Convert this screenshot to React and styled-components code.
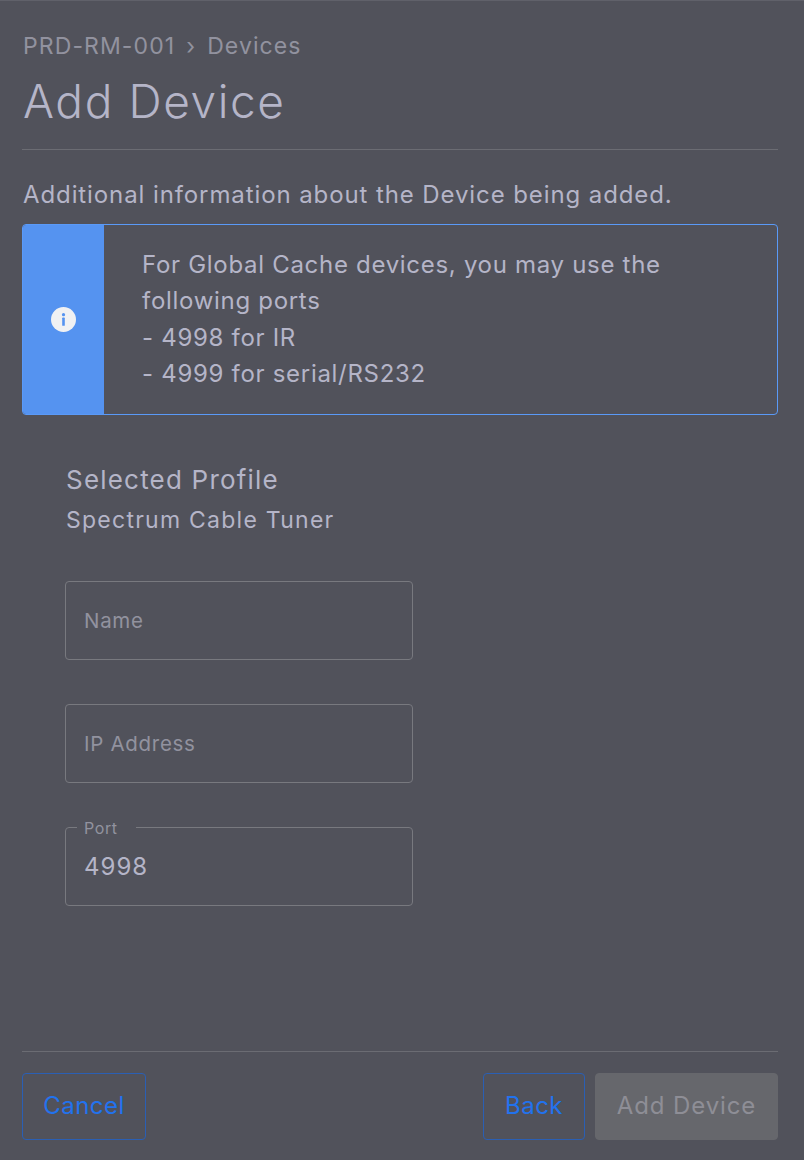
import React from 'react';
import styled, { createGlobalStyle } from 'styled-components';

const GlobalStyle = createGlobalStyle`
  html, body {
    margin: 0;
    padding: 0;
    background-color: #51525b;
  }
  * {
    box-sizing: border-box;
  }
`;

const Page = styled.div`
  width: 804px;
  height: 1160px;
  background-color: #51525b;
  border-top: 1px solid #60616a;
  padding: 0 26px 20px 22px;
  display: flex;
  flex-direction: column;
  font-family: Inter, "Liberation Sans", sans-serif;
  color: #b5b5c8;
`;

const Breadcrumb = styled.div`
  margin-top: 30px;
  height: 30px;
  line-height: 30px;
  font-size: 23px;
  letter-spacing: 1.1px;
  color: #92929f;
  display: flex;
  gap: 11px;
  padding-left: 1px;
`;

const Title = styled.h1`
  margin: 14px 0 0 1px;
  height: 52px;
  line-height: 52px;
  font-size: 46px;
  font-weight: 300;
  letter-spacing: 1.6px;
  color: #b5b5c8;
`;

const Divider = styled.div`
  margin-top: 22px;
  height: 1px;
  background-color: #6b6c73;
`;

const Description = styled.p`
  margin: 30px 0 0 1px;
  height: 30px;
  line-height: 30px;
  font-size: 24px;
  letter-spacing: 0.9px;
  color: #b5b5c8;
  white-space: nowrap;
`;

const InfoBox = styled.div`
  margin-top: 14px;
  height: 191px;
  display: flex;
  border: 1px solid #5a9af8;
  border-radius: 4px;
  overflow: hidden;
`;

const InfoSide = styled.div`
  width: 81px;
  background-color: #5593f0;
  display: flex;
  align-items: center;
  justify-content: center;
`;

const InfoText = styled.div`
  padding: 22px 0 0 38px;
  font-size: 24px;
  letter-spacing: 0.7px;
  line-height: 36.4px;
  white-space: nowrap;
`;

const Form = styled.div`
  margin: 47px 0 0 44px;
  display: flex;
  flex-direction: column;
  flex: 1;
`;

const ProfileLabel = styled.div`
  height: 36px;
  line-height: 36px;
  font-size: 26px;
  letter-spacing: 1.2px;
`;

const ProfileName = styled.div`
  margin-top: 4px;
  height: 36px;
  line-height: 36px;
  font-size: 23px;
  letter-spacing: 1.25px;
`;

const Fields = styled.div`
  margin: 43px 0 0 -1px;
  display: flex;
  flex-direction: column;
  gap: 44px;
`;

const Field = styled.div`
  position: relative;
  width: 348px;
  height: 79px;
  border: 1px solid #78797f;
  border-radius: 4px;
  padding: ${(p) => (p.$filled ? '0 18px 1px' : '0 18px')};
  display: flex;
  align-items: center;
  font-size: ${(p) => (p.$filled ? '24px' : '20.5px')};
  letter-spacing: ${(p) => (p.$filled ? '1px' : '0.7px')};
  color: ${(p) => (p.$filled ? '#b5b5c8' : '#92929f')};
`;

const FloatLabel = styled.span`
  position: absolute;
  top: -10px;
  left: 11px;
  padding: 0 18px 0 7px;
  background-color: #51525b;
  font-size: 16px;
  letter-spacing: 0.6px;
  line-height: 20px;
  color: #92929f;
`;

const Footer = styled.div`
  border-top: 1px solid #6b6c73;
  padding-top: 21px;
  display: flex;
  align-items: center;
  gap: 10px;
`;

const Spacer = styled.div`
  flex: 1;
`;

const Button = styled.button`
  height: 67px;
  width: ${(p) => p.$width}px;
  padding: 0 0 2px;
  border-radius: 4px;
  border: 1px solid ${(p) => (p.disabled ? '#66676c' : '#2a5fb4')};
  background-color: ${(p) => (p.disabled ? '#66676c' : 'transparent')};
  color: ${(p) => (p.disabled ? '#8e8e96' : '#2272ee')};
  font-family: inherit;
  font-size: 24px;
  letter-spacing: ${(p) => (p.disabled ? '0.9px' : '0.5px')};
`;

export default function App() {
  return (
    <>
      <GlobalStyle />
      <Page>
        <Breadcrumb>
          <span>PRD-RM-001</span>
          <span>›</span>
          <span>Devices</span>
        </Breadcrumb>
        <Title>Add Device</Title>
        <Divider />
        <Description>Additional information about the Device being added.</Description>
        <InfoBox>
          <InfoSide>
            <svg width="25" height="25" viewBox="0 0 25 25">
              <circle cx="12.5" cy="12.5" r="12.5" fill="#f0f1f3" />
              <circle cx="12.5" cy="7.7" r="1.6" fill="#5593f0" />
              <rect x="11.2" y="10.6" width="2.6" height="8.2" rx="0.6" fill="#5593f0" />
            </svg>
          </InfoSide>
          <InfoText>
            For Global Cache devices, you may use the
            <br />
            following ports
            <br />- 4998 for IR
            <br />- 4999 for serial/RS232
          </InfoText>
        </InfoBox>
        <Form>
          <ProfileLabel>Selected Profile</ProfileLabel>
          <ProfileName>Spectrum Cable Tuner</ProfileName>
          <Fields>
            <Field>Name</Field>
            <Field>IP Address</Field>
            <Field $filled>
              <FloatLabel>Port</FloatLabel>
              4998
            </Field>
          </Fields>
        </Form>
        <Footer>
          <Button $width={124}>Cancel</Button>
          <Spacer />
          <Button $width={102}>Back</Button>
          <Button $width={183} disabled>Add Device</Button>
        </Footer>
      </Page>
    </>
  );
}
